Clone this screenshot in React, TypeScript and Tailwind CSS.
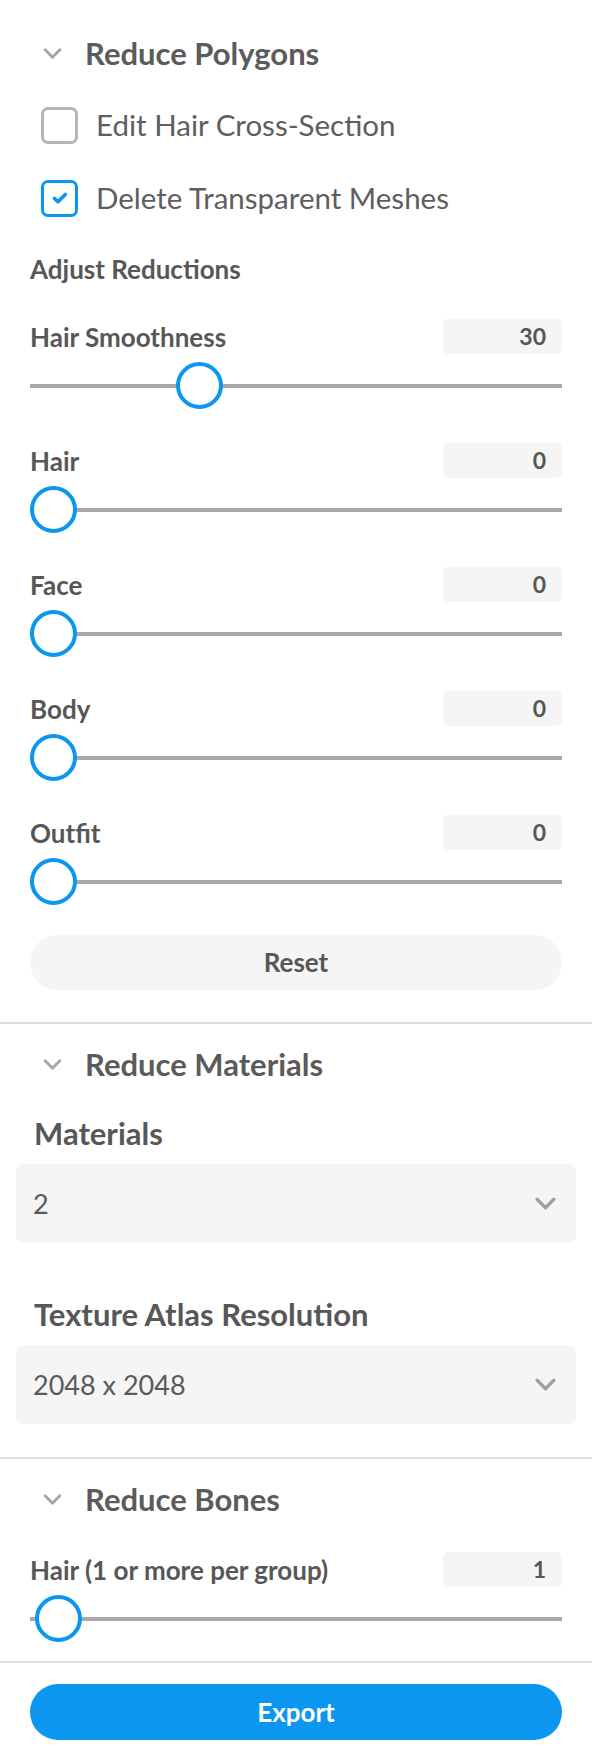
import React from 'react'

const font = { fontFamily: 'Lato, "Noto Sans", sans-serif' }

const Chevron = ({ className }: { className?: string }) => (
    <svg viewBox="0 0 20 12" className={className} fill="none">
        <path d="M2 2l8 8 8-8" stroke="currentColor" strokeWidth="3.2" strokeLinecap="round" strokeLinejoin="round" />
    </svg>
)

const SectionHeader = ({ title }: { title: string }) => (
    <div className="flex items-center h-[40px]">
        <Chevron className="w-[19px] h-[11px] ml-[43px] text-[#a6a6a6]" />
        <span className="ml-[23px] text-[31px] font-bold text-[#5b5b5b] leading-none">{title}</span>
    </div>
)

const Checkbox = ({ checked, label }: { checked: boolean; label: string }) => (
    <div className="flex items-center pl-[41px] h-[38px]">
        <div
            className={
                checked
                    ? 'w-[37px] h-[37px] rounded-[7px] border-[3px] border-[#0b96f0] flex items-center justify-center'
                    : 'w-[37px] h-[37px] rounded-[7px] border-[3px] border-[#b5b5b5]'
            }
        >
            {checked && (
                <svg viewBox="0 0 24 24" className="w-[22px] h-[22px]" fill="none">
                    <path d="M6 12.5l3.8 3.6 8-8" stroke="#0b96f0" strokeWidth="4" strokeLinecap="round" strokeLinejoin="round" />
                </svg>
            )}
        </div>
        <span className="ml-[18px] text-[29.5px] text-[#5e5e5e] leading-none">{label}</span>
    </div>
)

const Slider = ({ label, value, pct, last }: { label: string; value: string; pct: number; last?: boolean }) => (
    <div className={last ? 'px-[30px]' : 'px-[30px] pb-[34px]'}>
        <div className="flex items-center justify-between h-[35px]">
            <span className="text-[26px] font-bold text-[#575757] leading-none">{label}</span>
            <div className="w-[119px] h-[35px] rounded-[5px] bg-[#f5f5f5] flex items-center justify-end pr-[16px]">
                <span className="text-[23px] font-bold text-[#575757] leading-none">{value}</span>
            </div>
        </div>
        <div className="relative h-[47px] mt-[8px] flex items-center">
            <div className="w-full h-[4px] bg-[#a9a9a9]" />
            <div
                className="absolute top-0 w-[47px] h-[47px] rounded-full border-[4px] border-[#0b96f0] bg-white"
                style={{ left: `calc((100% - 47px) * ${pct / 100})` }}
            />
        </div>
    </div>
)

const Select = ({ value }: { value: string }) => (
    <div className="mx-[16px] h-[79px] rounded-[7px] bg-[#f5f5f5] flex items-center justify-between pl-[17px] pr-[20px]">
        <span className="text-[27px] text-[#5a5a5a] leading-none">{value}</span>
        <Chevron className="w-[21px] h-[13px] text-[#a0a0a0]" />
    </div>
)

export default function App() {
    return (
        <div className="w-[592px] bg-white" style={font}>
            <div className="pt-[33px]">
                <SectionHeader title="Reduce Polygons" />
                <div className="mt-[33px]">
                    <Checkbox checked={false} label="Edit Hair Cross-Section" />
                </div>
                <div className="mt-[35px]">
                    <Checkbox checked={true} label="Delete Transparent Meshes" />
                </div>
                <div className="px-[30px] mt-[37px] h-[30px] flex items-center">
                    <span className="text-[26px] font-bold text-[#575757] leading-none">Adjust Reductions</span>
                </div>
                <div className="mt-[35px]">
                    <Slider label="Hair Smoothness" value="30" pct={30} />
                    <Slider label="Hair" value="0" pct={0} />
                    <Slider label="Face" value="0" pct={0} />
                    <Slider label="Body" value="0" pct={0} />
                    <Slider label="Outfit" value="0" pct={0} last />
                </div>
                <div className="px-[30px] mt-[30px]">
                    <button className="w-full h-[55px] rounded-full bg-[#f5f5f5] text-[26px] font-bold text-[#575757]">
                        Reset
                    </button>
                </div>
            </div>
            <div className="mt-[32px] h-[2px] bg-[#dedede]" />

            <div className="pt-[20px]">
                <SectionHeader title="Reduce Materials" />
                <div className="px-[34px] mt-[32px] h-[34px] flex items-center">
                    <span className="text-[31px] font-bold text-[#575757] leading-none">Materials</span>
                </div>
                <div className="mt-[14px]">
                    <Select value="2" />
                </div>
                <div className="px-[34px] mt-[54px] h-[34px] flex items-center">
                    <span className="text-[31px] font-bold text-[#575757] leading-none">Texture Atlas Resolution</span>
                </div>
                <div className="mt-[14px]">
                    <Select value="2048 x 2048" />
                </div>
            </div>
            <div className="mt-[33px] h-[2px] bg-[#dedede]" />

            <div className="pt-[20px]">
                <SectionHeader title="Reduce Bones" />
                <div className="mt-[33px]">
                    <Slider label="Hair (1 or more per group)" value="1" pct={1} last />
                </div>
            </div>
            <div className="mt-[19px] h-[2px] bg-[#dedede]" />

            <div className="px-[30px] pt-[21px] pb-[24px]">
                <button className="w-full h-[56px] rounded-full bg-[#0b96f0] text-[26px] font-bold text-white">
                    Export
                </button>
            </div>
        </div>
    )
}
